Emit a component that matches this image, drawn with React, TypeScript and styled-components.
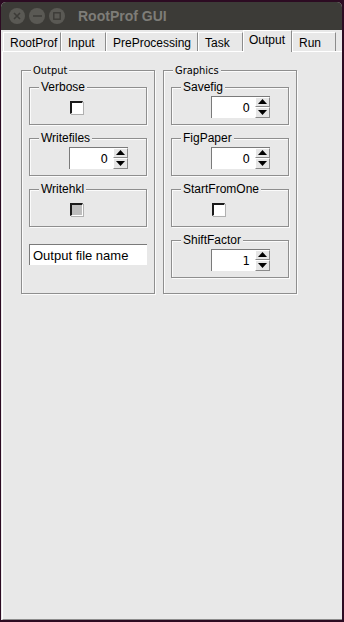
import React, { FC } from 'react';
import styled, { createGlobalStyle } from 'styled-components';

const GlobalStyle = createGlobalStyle`
  html, body {
    margin: 0;
    padding: 0;
    width: 344px;
    height: 622px;
    overflow: hidden;
    background: #2c0b22;
  }
`;

const Window = styled.div`
  margin: 2px 0 0 1px;
  width: 341px;
  height: 618px;
  background: #e8e8e8;
  border-radius: 5px 5px 0 0;
  overflow: hidden;
  display: flex;
  flex-direction: column;
  font-family: 'Liberation Sans', Arial, sans-serif;
`;

const TitleBar = styled.div`
  height: 28px;
  flex: none;
  background: #3c3b37;
  display: flex;
  align-items: center;
  padding-left: 8px;
  gap: 4px;
`;

const WinButton = styled.div`
  width: 16px;
  height: 16px;
  border-radius: 50%;
  background: #5a5954;
  display: flex;
  align-items: center;
  justify-content: center;
`;

const Title = styled.div`
  margin-left: 9px;
  color: #7e7d78;
  font-weight: bold;
  font-size: 14px;
`;

const TabBar = styled.div`
  height: 21px;
  flex: none;
  display: flex;
  align-items: flex-end;
  padding-left: 2px;
`;

const Tab = styled.div<{ $w: number; $active?: boolean }>`
  box-sizing: border-box;
  width: ${p => p.$w}px;
  height: ${p => (p.$active ? 22 : 19)}px;
  margin-bottom: ${p => (p.$active ? -1 : 0)}px;
  position: relative;
  z-index: ${p => (p.$active ? 1 : 0)};
  background: #e8e8e8;
  border-style: solid;
  border-width: 1px 1px 0 1px;
  border-color: #fff #8c8c8c transparent #fff;
  font-size: 12px;
  color: #000;
  padding: ${p => (p.$active ? '2px' : '3px')} 0 0 ${p => (p.$active ? 5 : 6)}px;
  white-space: nowrap;
`;

const Panel = styled.div`
  flex: 1;
  margin-left: 1px;
  border-top: 1px solid #fff;
  border-left: 1px solid #fff;
  border-bottom: 1px solid #8c8c8c;
  display: flex;
  align-items: flex-start;
  gap: 8px;
  padding: 18px 0 0 18px;
`;

const Group = styled.div<{ $outer?: boolean }>`
  position: relative;
  box-sizing: border-box;
  width: ${p => (p.$outer ? 134 : 118)}px;
  height: ${p => (p.$outer ? 224 : 38)}px;
  border: 1px solid #8e8e8e;
  box-shadow: inset 1px 1px 0 #fbfbfb, 1px 1px 0 #fbfbfb;
  padding: ${p => (p.$outer ? '16px 0 0 7px' : '0 0 0 39px')};
  display: flex;
  flex-direction: column;
  gap: ${p => (p.$outer ? 13 : 0)}px;
  justify-content: ${p => (p.$outer ? 'flex-start' : 'center')};
`;

const GroupLabel = styled.span<{ $outer?: boolean }>`
  position: absolute;
  left: ${p => (p.$outer ? 9 : 9)}px;
  top: ${p => (p.$outer ? -7 : -8)}px;
  padding: 0 2px;
  background: #e8e8e8;
  color: #000;
  line-height: 14px;
  font-family: ${p =>
    p.$outer ? "'DejaVu Sans Condensed', 'DejaVu Sans', sans-serif" : "'Liberation Sans', Arial, sans-serif"};
  font-size: ${p => (p.$outer ? 11 : 12)}px;
`;

const Check = styled.div<{ $disabled?: boolean }>`
  box-sizing: border-box;
  width: 13px;
  height: 13px;
  margin: 2px 0 0 1px;
  background: ${p => (p.$disabled ? '#bdbdbd' : '#fff')};
  border-style: solid;
  border-width: 2px 1px 1px 2px;
  border-color: #1a1a1a #fdfdfd #fdfdfd #1a1a1a;
  box-shadow: 1px 1px 0 #b0b0b0;
`;

const Spin = styled.div`
  display: flex;
  height: 22px;
  width: 59px;
  margin-top: 1px;
`;

const SpinEntry = styled.div`
  box-sizing: border-box;
  flex: 1;
  background: #fff;
  border-top: 1px solid #7a7a7a;
  border-left: 1px solid #7a7a7a;
  font-family: 'DejaVu Sans Condensed', 'DejaVu Sans', sans-serif;
  font-size: 13px;
  text-align: right;
  padding: 3px 5px 0 0;
`;

const Arrows = styled.div`
  width: 15px;
  display: flex;
  flex-direction: column;
  border-top: 1px solid #7a7a7a;
  box-sizing: border-box;
`;

const ArrowBtn = styled.div`
  flex: 1;
  box-sizing: border-box;
  background: #e6e6e6;
  border-style: solid;
  border-width: 1px;
  border-color: #fff #8a8a8a #8a8a8a #fff;
  display: flex;
  align-items: center;
  justify-content: center;
`;

const TextEntry = styled.div`
  box-sizing: border-box;
  width: 118px;
  height: 21px;
  margin-top: 4px;
  background: #fff;
  border-top: 1px solid #7a7a7a;
  border-left: 1px solid #7a7a7a;
  font-size: 13px;
  padding: 3px 0 0 3px;
  color: #000;
`;

const Spinbox: FC<{ value: number }> = ({ value }) => (
  <Spin>
    <SpinEntry>{value}</SpinEntry>
    <Arrows>
      <ArrowBtn>
        <svg width="9" height="5" viewBox="0 0 9 5"><path d="M0 5 L4.5 0 L9 5 Z" fill="#000" /></svg>
      </ArrowBtn>
      <ArrowBtn>
        <svg width="9" height="5" viewBox="0 0 9 5"><path d="M0 0 L9 0 L4.5 5 Z" fill="#000" /></svg>
      </ArrowBtn>
    </Arrows>
  </Spin>
);

const tabs = [
  { name: 'RootProf', w: 58 },
  { name: 'Input', w: 45 },
  { name: 'PreProcessing', w: 92 },
  { name: 'Task', w: 45 },
  { name: 'Output', w: 49, active: true },
  { name: 'Run', w: 44 },
];

const App: FC = () => (
  <>
    <GlobalStyle />
    <Window>
      <TitleBar>
        <WinButton>
          <svg width="8" height="8" viewBox="0 0 8 8">
            <path d="M1 1 L7 7 M7 1 L1 7" stroke="#3c3b37" strokeWidth="1.6" />
          </svg>
        </WinButton>
        <WinButton>
          <svg width="9" height="8" viewBox="0 0 9 8">
            <path d="M0 4 H9" stroke="#3c3b37" strokeWidth="1.6" />
          </svg>
        </WinButton>
        <WinButton>
          <svg width="8" height="8" viewBox="0 0 8 8">
            <rect x="0.8" y="0.8" width="6.4" height="6.4" fill="none" stroke="#3c3b37" strokeWidth="1.4" />
          </svg>
        </WinButton>
        <Title>RootProf GUI</Title>
      </TitleBar>
      <TabBar>
        {tabs.map(t => (
          <Tab key={t.name} $w={t.w} $active={t.active}>
            {t.name}
          </Tab>
        ))}
      </TabBar>
      <Panel>
        <Group $outer>
          <GroupLabel $outer>Output</GroupLabel>
          <Group>
            <GroupLabel>Verbose</GroupLabel>
            <Check />
          </Group>
          <Group>
            <GroupLabel>Writefiles</GroupLabel>
            <Spinbox value={0} />
          </Group>
          <Group>
            <GroupLabel>Writehkl</GroupLabel>
            <Check $disabled />
          </Group>
          <TextEntry>Output file name</TextEntry>
        </Group>
        <Group $outer>
          <GroupLabel $outer>Graphics</GroupLabel>
          <Group>
            <GroupLabel>Savefig</GroupLabel>
            <Spinbox value={0} />
          </Group>
          <Group>
            <GroupLabel>FigPaper</GroupLabel>
            <Spinbox value={0} />
          </Group>
          <Group>
            <GroupLabel>StartFromOne</GroupLabel>
            <Check />
          </Group>
          <Group>
            <GroupLabel>ShiftFactor</GroupLabel>
            <Spinbox value={1} />
          </Group>
        </Group>
      </Panel>
    </Window>
  </>
);

export default App;
